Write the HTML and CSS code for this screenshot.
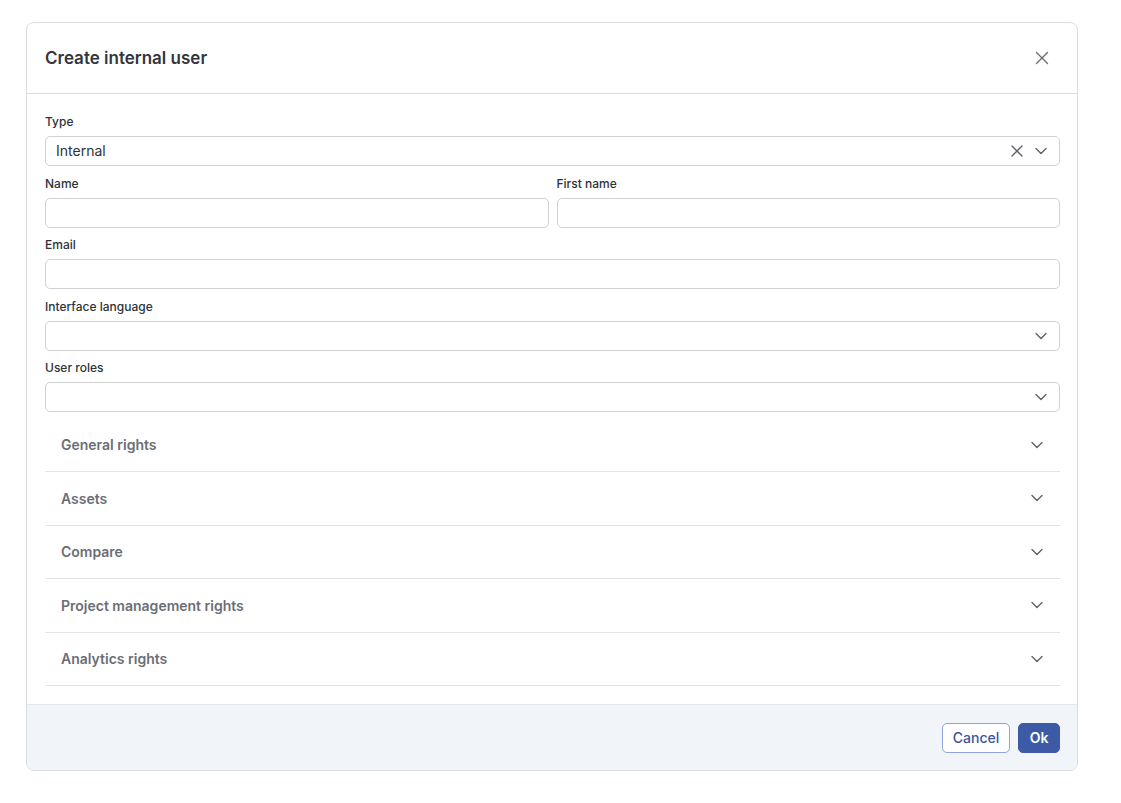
FILE: index.html
```html
<!doctype html>
<html lang="en">
<head>
    <meta charset="UTF-8">
    <meta name="viewport" content="width=device-width, initial-scale=1.0">
    <title>Create internal user</title>
    <link rel="stylesheet" href="styles.css">
</head>
<body>

    <div class="modal">
        <div class="modal-header">
            <h2 class="modal-header__title">Create internal user</h2>
            <span class="modal-header__close">
                <svg width="14" height="14" viewBox="0 0 14 14"><path d="M1.5 1.5l11 11M12.5 1.5l-11 11" stroke="#6b6e76" stroke-width="1.4" fill="none" stroke-linecap="round"/></svg>
            </span>
        </div>

        <div class="modal-body">
            <div class="field">
                <label class="field__label">Type</label>
                <div class="field__input field__input-select">
                    <span class="field__value">Internal</span>
                    <span class="field__icons">
                        <svg width="14" height="14" viewBox="0 0 14 14"><path d="M2 2l10 10M12 2L2 12" stroke="#5f626a" stroke-width="1.4" fill="none" stroke-linecap="round"/></svg>
                        <svg width="14" height="14" viewBox="0 0 14 14"><path d="M2 4.5l5 5 5-5" stroke="#5f626a" stroke-width="1.4" fill="none" stroke-linecap="round" stroke-linejoin="round"/></svg>
                    </span>
                </div>
            </div>

            <div class="field-row">
                <div class="field">
                    <label class="field__label">Name</label>
                    <div class="field__input"></div>
                </div>
                <div class="field">
                    <label class="field__label">First name</label>
                    <div class="field__input"></div>
                </div>
            </div>

            <div class="field">
                <label class="field__label">Email</label>
                <div class="field__input"></div>
            </div>

            <div class="field">
                <label class="field__label">Interface language</label>
                <div class="field__input field__input-select">
                    <span class="field__value"></span>
                    <span class="field__icons">
                        <svg width="14" height="14" viewBox="0 0 14 14"><path d="M2 4.5l5 5 5-5" stroke="#5f626a" stroke-width="1.4" fill="none" stroke-linecap="round" stroke-linejoin="round"/></svg>
                    </span>
                </div>
            </div>

            <div class="field">
                <label class="field__label">User roles</label>
                <div class="field__input field__input-select">
                    <span class="field__value"></span>
                    <span class="field__icons">
                        <svg width="14" height="14" viewBox="0 0 14 14"><path d="M2 4.5l5 5 5-5" stroke="#5f626a" stroke-width="1.4" fill="none" stroke-linecap="round" stroke-linejoin="round"/></svg>
                    </span>
                </div>
            </div>

            <div class="accordion">
                <div class="accordion__item">
                    <span>General rights</span>
                    <svg width="14" height="14" viewBox="0 0 14 14"><path d="M2 4.5l5 5 5-5" stroke="#5f626a" stroke-width="1.4" fill="none" stroke-linecap="round" stroke-linejoin="round"/></svg>
                </div>
                <div class="accordion__item">
                    <span>Assets</span>
                    <svg width="14" height="14" viewBox="0 0 14 14"><path d="M2 4.5l5 5 5-5" stroke="#5f626a" stroke-width="1.4" fill="none" stroke-linecap="round" stroke-linejoin="round"/></svg>
                </div>
                <div class="accordion__item">
                    <span>Compare</span>
                    <svg width="14" height="14" viewBox="0 0 14 14"><path d="M2 4.5l5 5 5-5" stroke="#5f626a" stroke-width="1.4" fill="none" stroke-linecap="round" stroke-linejoin="round"/></svg>
                </div>
                <div class="accordion__item">
                    <span>Project management rights</span>
                    <svg width="14" height="14" viewBox="0 0 14 14"><path d="M2 4.5l5 5 5-5" stroke="#5f626a" stroke-width="1.4" fill="none" stroke-linecap="round" stroke-linejoin="round"/></svg>
                </div>
                <div class="accordion__item">
                    <span>Analytics rights</span>
                    <svg width="14" height="14" viewBox="0 0 14 14"><path d="M2 4.5l5 5 5-5" stroke="#5f626a" stroke-width="1.4" fill="none" stroke-linecap="round" stroke-linejoin="round"/></svg>
                </div>
            </div>
        </div>

        <div class="modal-footer">
            <div class="btn btn-outline">Cancel</div>
            <div class="btn btn-primary">Ok</div>
        </div>
    </div>

</body>
</html>
```

FILE: styles.css
```css
*,*:before,*:after{
    box-sizing: border-box;
    font-family: 'Inter', 'Liberation Sans', sans-serif;
}
body{
    margin: 0;
    padding: 22px 0 0 26px;
    background: #fff;
}
.modal{
    width: 1052px;
    border: 1px solid #dcdde0;
    border-radius: 8px;
    overflow: hidden;
    background: #fff;
}
.modal-header{
    display: flex;
    justify-content: space-between;
    align-items: center;
    height: 71px;
    padding: 0 28px 0 18px;
    border-bottom: 1px solid #dcdde0;
}
.modal-header__title{
    margin: 0 0 1px;
    font-size: 17px;
    font-weight: 600;
    color: #33363c;
}
.modal-header__close{
    display: flex;
}
.modal-body{
    padding: 20px 17px 18px 18px;
}
.field{
    display: flex;
    flex-direction: column;
    margin-bottom: 9.5px;
}
.field__label{
    font-size: 12px;
    line-height: 16px;
    font-weight: 500;
    color: #2f3237;
    margin-bottom: 6px;
}
.field__input{
    height: 30px;
    border: 1px solid #cfd1d5;
    border-radius: 5px;
    display: flex;
    align-items: center;
    justify-content: space-between;
    padding: 0 11px 0 10px;
}
.field__value{
    font-size: 14px;
    color: #2f3237;
    margin-top: -1px;
}
.field__icons{
    display: flex;
    gap: 10px;
}
.field-row{
    display: flex;
    gap: 8px;
}
.field-row .field{
    flex: 1;
}
.accordion{
    margin-top: -3px;
}
.accordion__item{
    display: flex;
    justify-content: space-between;
    align-items: center;
    height: 53.5px;
    padding: 0 16px;
    border-bottom: 1px solid #e2e3e6;
    font-size: 14px;
    font-weight: 600;
    color: #6b6e76;
}
.modal-footer{
    display: flex;
    justify-content: flex-end;
    align-items: center;
    gap: 8px;
    height: 66px;
    padding: 0 17px 0 0;
    background: #f1f4f9;
    border-top: 1px solid #e6e8ec;
}
.btn{
    height: 30px;
    line-height: 28px;
    padding: 0 10px;
    border-radius: 5px;
    font-size: 14px;
    font-weight: 500;
    cursor: pointer;
}
.btn-outline{
    border: 1px solid #8ea4dd;
    color: #3b559f;
    background: #fff;
}
.btn-primary{
    border: 1px solid #3d5aa6;
    background: #3d5aa6;
    color: #fff;
    font-weight: 600;
    padding: 0 10.5px;
}
```
